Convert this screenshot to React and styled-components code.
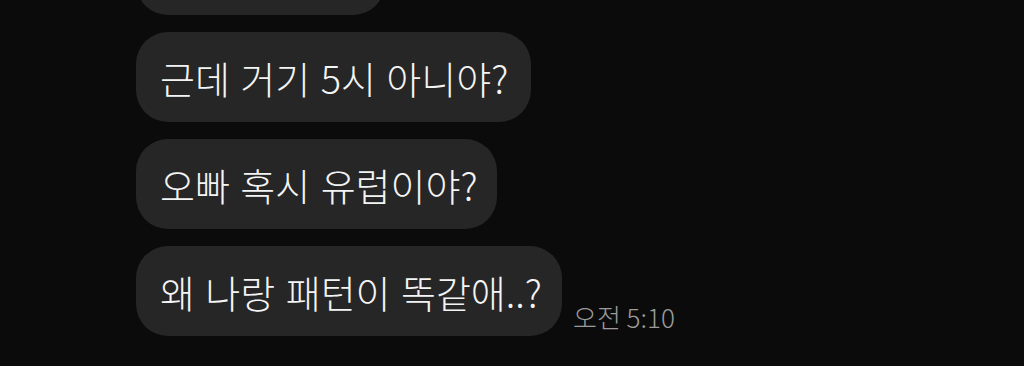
import React from 'react';
import styled, { createGlobalStyle } from 'styled-components';

const GlobalStyle = createGlobalStyle`
    html, body {
        margin: 0;
        padding: 0;
        background-color: #0b0b0b;
        overflow: hidden;
    }
`;

const ChatStyle = styled.div`
    width: 1024px;
    height: 366px;
    overflow: hidden;
    background-color: #0b0b0b;
    font-family: "Noto Sans CJK KR", "Noto Sans", sans-serif;

    .thread {
        display: flex;
        flex-direction: column;
        gap: 17px;
        padding-left: 136px;
        margin-top: -75px;
    }
`;

const Row = styled.div`
    display: flex;
    align-items: flex-end;
    gap: 11px;
`;

const Bubble = styled.div`
    box-sizing: border-box;
    height: 90px;
    width: ${props => props.$w}px;
    padding: 0 24px;
    display: flex;
    align-items: center;
    background-color: #262626;
    border-radius: 32px;
    color: #f4f4f4;
    font-size: 38px;
    font-weight: 300;
    word-spacing: 2px;
    white-space: nowrap;
`;

const Time = styled.span`
    color: #9b9b9b;
    font-size: 26px;
    font-weight: 300;
    padding-bottom: 1px;
    white-space: nowrap;
`;

const messages = [
    { text: '', w: 249 },
    { text: '근데 거기 5시 아니야?', w: 395 },
    { text: '오빠 혹시 유럽이야?', w: 361 },
    { text: '왜 나랑 패턴이 똑같애..?', w: 426, time: '오전 5:10' },
];

export default function App() {
    return (
        <ChatStyle>
            <GlobalStyle />
            <div className="thread">
                {messages.map((msg, index) => {
                    return (
                        <Row key={index}>
                            <Bubble $w={msg.w}>{msg.text}</Bubble>
                            {msg.time && <Time>{msg.time}</Time>}
                        </Row>
                    )
                })}
            </div>
        </ChatStyle>
    )
}
